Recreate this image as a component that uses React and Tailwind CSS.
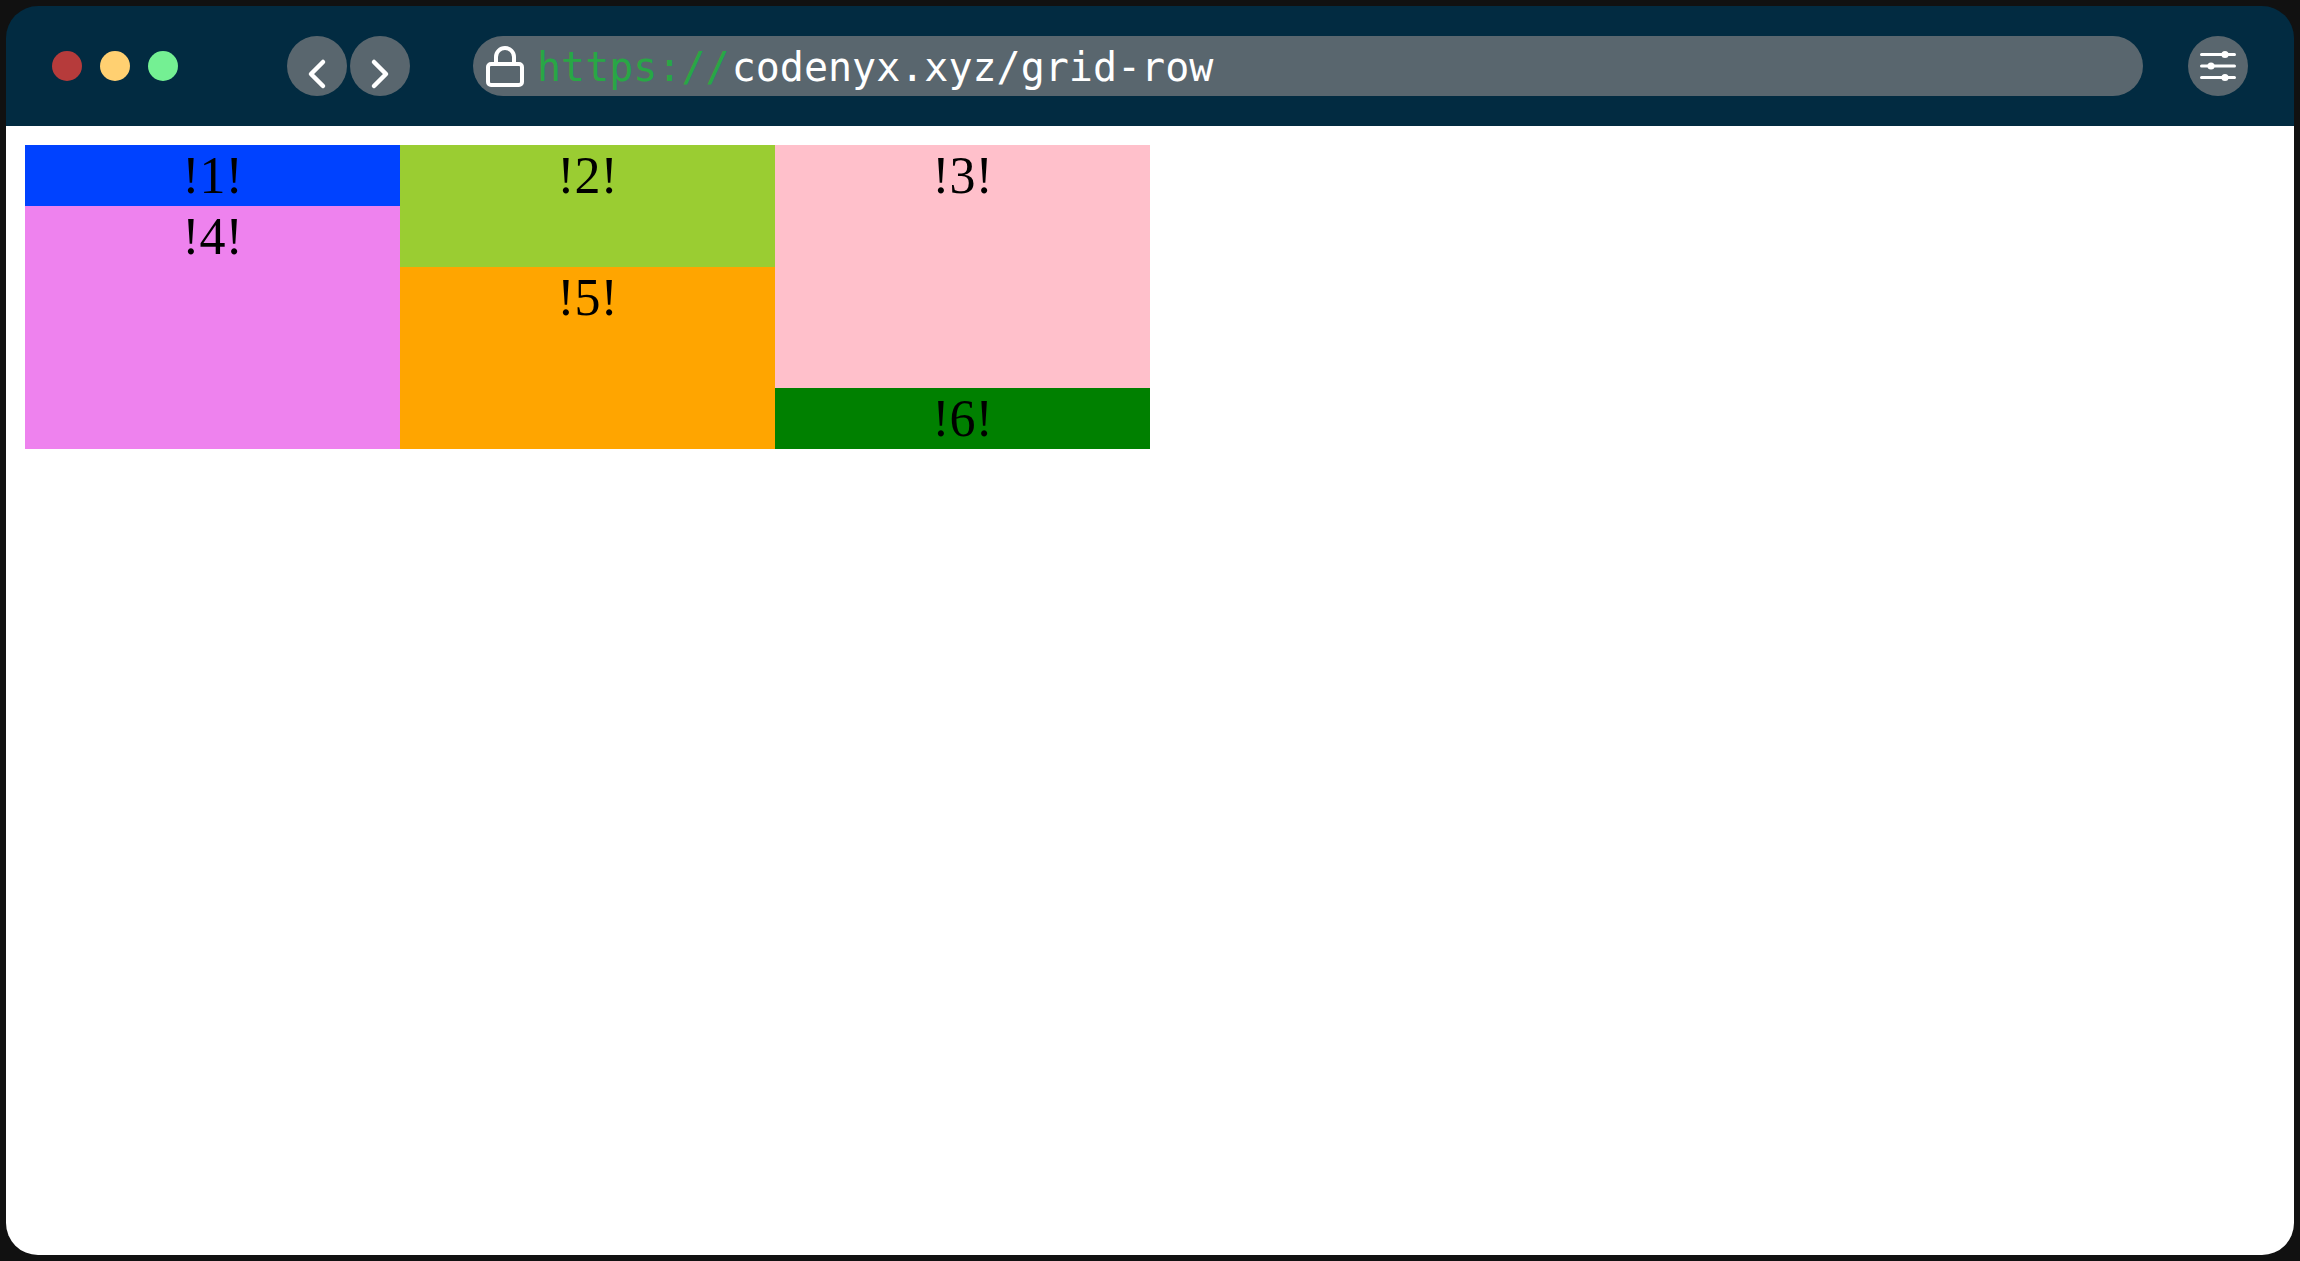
const cells = [
  { label: "!1!", className: "bg-[#0042ff] col-start-1 row-start-1" },
  { label: "!2!", className: "bg-[#9acd32] col-start-2 row-start-1 row-span-2" },
  { label: "!3!", className: "bg-[#ffc0cb] col-start-3 row-start-1 row-span-4" },
  { label: "!4!", className: "bg-[#ee82ee] col-start-1 row-start-2 row-span-4" },
  { label: "!5!", className: "bg-[#ffa500] col-start-2 row-start-3 row-span-3" },
  { label: "!6!", className: "bg-[#008000] col-start-3 row-start-5" },
];

function RoundButton({ label, children }) {
  return (
    <button type="button" aria-label={label} className="size-15 shrink-0 rounded-full bg-[#59666e] text-white">
      <svg viewBox="0 0 60 60" className="size-15" fill="none" stroke="currentColor" strokeLinecap="round" aria-hidden="true">
        {children}
      </svg>
    </button>
  );
}

function WindowDots() {
  return (
    <div className="flex gap-[18px]">
      <button type="button" aria-label="Close" className="size-[30px] rounded-full bg-[#b63b3b]" />
      <button type="button" aria-label="Minimize" className="size-[30px] rounded-full bg-[#ffd071]" />
      <button type="button" aria-label="Maximize" className="size-[30px] rounded-full bg-[#74f093]" />
    </div>
  );
}

function AddressBar() {
  return (
    <div className="flex h-15 min-w-0 flex-1 items-center rounded-full bg-[#59666e] pl-3 font-['DejaVu_Sans_Mono',monospace] text-[40px] leading-15">
      <svg viewBox="0 0 40 44" className="h-11 w-10 shrink-0 text-white" fill="none" stroke="currentColor" strokeWidth="4" aria-hidden="true">
        <rect x="3" y="20" width="34" height="21" rx="3" />
        <path d="M11 20v-7a9 9 0 0 1 18 0v7" />
      </svg>
      <div className="ml-3 flex min-w-0 flex-1 gap-0.5 pt-0.5">
        <label htmlFor="address" className="text-[#28a745]">https://</label>
        <input
          id="address"
          type="text"
          defaultValue="codenyx.xyz/grid-row"
          spellCheck={false}
          className="h-15 min-w-0 flex-1 rounded-r-full bg-transparent text-white outline-none"
        />
      </div>
    </div>
  );
}

export default function App() {
  return (
    <div className="flex min-h-screen flex-col bg-[#111111] p-1.5">
      <header className="flex h-30 items-center rounded-t-[32px] bg-[#022b41] px-[46px]">
        <WindowDots />
        <nav className="mr-[63px] ml-[109px] flex gap-[3px]">
          <RoundButton label="Back">
            <path d="M36 26 24 38l12 12" strokeWidth="4.5" strokeLinejoin="round" />
          </RoundButton>
          <RoundButton label="Forward">
            <path d="m24 26 12 12-12 12" strokeWidth="4.5" strokeLinejoin="round" />
          </RoundButton>
        </nav>
        <AddressBar />
        <div className="ml-[45px] flex">
          <RoundButton label="Settings">
            <path d="M13.5 18.5h33M13.5 30h33M13.5 41.5h33" strokeWidth="3" />
            <g fill="currentColor" stroke="none">
              <circle cx="37" cy="18.5" r="3.6" />
              <circle cx="23" cy="30" r="3.6" />
              <circle cx="37" cy="41.5" r="3.6" />
            </g>
          </RoundButton>
        </div>
      </header>
      <main className="flex-1 rounded-b-[32px] bg-white p-[19px]">
        <div className="grid h-[304px] w-1/2 grid-cols-3 grid-rows-5 text-center font-['Liberation_Serif',serif] text-[52px] leading-[61px] text-black">
          {cells.map((cell) => (
            <div key={cell.label} className={cell.className}>
              {cell.label}
            </div>
          ))}
        </div>
      </main>
    </div>
  );
}
